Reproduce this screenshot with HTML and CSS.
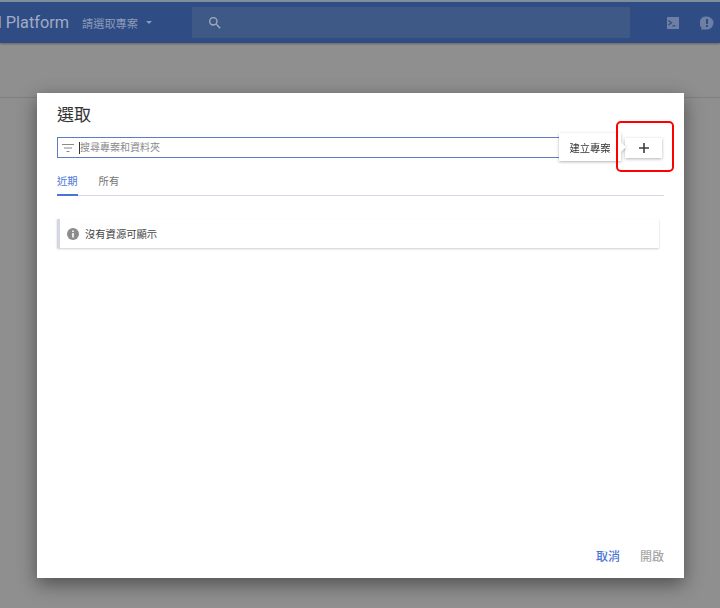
FILE: index.html
```html
<!DOCTYPE html>
<html lang="zh-Hant">
<head>
  <meta charset="UTF-8" />
  <title>選取</title>
  <link rel="stylesheet" href="styles.css">
</head>
<body>

  <header class="topbar">
    <div class="brand"><span>Google Cloud Platform</span></div>
    <div class="project-picker">
      <span>請選取專案</span>
      <i class="caret"></i>
    </div>
    <div class="search">
      <svg width="16" height="16" viewBox="0 0 24 24"><path fill="#a1adc4" d="M15.5 14h-.79l-.28-.27A6.47 6.47 0 0 0 16 9.5 6.5 6.5 0 1 0 9.5 16c1.61 0 3.09-.59 4.23-1.57l.27.28v.79l5 4.99L20.49 19l-4.99-5zm-6 0a4.5 4.5 0 1 1 0-9 4.5 4.5 0 0 1 0 9z"/></svg>
    </div>
    <div class="topbar-icons">
      <svg width="12" height="12" viewBox="0 0 12 12"><path fill="#6d7fa3" d="M0 0h12v12H0z"/><path fill="none" stroke="#2f4c85" stroke-width="1.200" d="M1.500 3.500 4.500 5.800 1.500 8"/><path fill="none" stroke="#2f4c85" stroke-width="1.200" d="M5.500 8.800h3"/></svg>
      <svg width="14" height="14" viewBox="0 0 14 14"><path fill="#6d7fa3" d="M7 .5a6.500 6.500 0 0 1 0 13H.8l1-1.600A6.500 6.500 0 0 1 7 .5z"/><path fill="#2f4c85" d="M6 3h2v5H6zM6 9h2v2H6z"/></svg>
    </div>
  </header>

  <div class="subbar"></div>

  <section class="dialog">
    <h2>選取</h2>

    <div class="filter-row">
      <div class="filter">
        <svg width="14" height="10" viewBox="0 0 14 10"><path fill="none" stroke="#8a8a8a" d="M1 1.500h12M3 5h8M5.500 8.500h3"/></svg>
        <i class="cursor"></i>
        <span>搜尋專案和資料夾</span>
      </div>
      <button class="add-btn">
        <svg width="12" height="12" viewBox="0 0 12 12"><path fill="#3c3c3c" d="M5.200 1h1.600v4.200H11v1.600H6.800V11H5.200V6.800H1V5.200h4.200z"/></svg>
      </button>
    </div>

    <nav class="tabs">
      <a class="active">近期</a>
      <a>所有</a>
    </nav>

    <div class="notice">
      <svg width="12" height="12" viewBox="0 0 12 12"><circle cx="6" cy="6" r="6" fill="#8c8c8c"/><path fill="#fff" d="M5.200 2.500h1.600v1.500H5.200zM5.200 5h1.600v4.500H5.200z"/></svg>
      <span>沒有資源可顯示</span>
    </div>

    <div class="actions">
      <a class="cancel">取消</a>
      <a class="open">開啟</a>
    </div>

    <div class="tooltip">建立專案</div>
    <div class="highlight"></div>
  </section>

</body>
</html>
```

FILE: styles.css
```css
:root {
  --font-stack: Roboto, "Noto Sans CJK TC", sans-serif;
  --blue: #4a74d8;
  --line: #d5d8e4;
}

* {
  margin: 0;
  padding: 0;
  box-sizing: border-box;
}

body {
  width: 720px;
  height: 608px;
  overflow: hidden;
  position: relative;
  font-family: var(--font-stack);
  background-color: #8f8f8f;
}

.topbar {
  height: 43px;
  display: flex;
  align-items: center;
  background-color: #2f4c85;
  border-top: 2px solid #7d8f9c;
  box-shadow: 0 1px 2px rgba(0, 0, 0, 0.3);
}

.brand {
  width: 69px;
  display: flex;
  justify-content: flex-end;
  overflow: hidden;
  white-space: nowrap;
  font-size: 16.300px;
  color: #a1adc4;
}

.project-picker {
  display: flex;
  align-items: center;
  gap: 8px;
  margin-left: 13px;
  font-size: 11.200px;
  color: #8c9ab6;
}

.caret {
  border-left: 3px solid transparent;
  border-right: 3px solid transparent;
  border-top: 3px solid #8c9ab6;
}

.search {
  width: 438px;
  height: 31px;
  margin-left: 40px;
  padding-left: 15px;
  display: flex;
  align-items: center;
  background-color: #3f5986;
}

.topbar-icons {
  display: flex;
  align-items: center;
  gap: 21px;
  margin-left: 37px;
}

.subbar {
  height: 55px;
  border-bottom: 1px solid #7f7f7f;
}

.dialog {
  position: absolute;
  left: 37px;
  top: 93px;
  width: 647px;
  height: 485px;
  padding: 13px 20px 14px;
  display: flex;
  flex-direction: column;
  background-color: #fff;
  box-shadow: 0 6px 18px rgba(0, 0, 0, 0.45);
}

.dialog h2 {
  font-size: 17px;
  font-weight: 400;
  line-height: 18px;
  color: #333;
}

.filter-row {
  display: flex;
  align-items: center;
  margin-top: 13px;
}

.filter {
  width: 526px;
  height: 21px;
  display: flex;
  align-items: center;
  padding-left: 3px;
  border: 1px solid #5c7cc9;
  font-size: 10px;
  color: #8b8b8b;
}

.filter span {
  padding-bottom: 2px;
}

.cursor {
  width: 1px;
  height: 12px;
  margin-left: 4px;
  background-color: #333;
}

.add-btn {
  width: 37px;
  height: 20px;
  margin-left: 42px;
  display: flex;
  align-items: center;
  justify-content: center;
  border: none;
  background-color: #fff;
  box-shadow: 0 1px 3px rgba(0, 0, 0, 0.3);
}

.tabs {
  display: flex;
  gap: 21px;
  margin-top: 13px;
  height: 25px;
  width: 607px;
  border-bottom: 1px solid var(--line);
  font-size: 10.300px;
  color: #757575;
}

.tabs a {
  height: 25px;
  padding-top: 2px;
}

.tabs .active {
  color: var(--blue);
  border-bottom: 2px solid var(--blue);
}

.notice {
  display: flex;
  align-items: center;
  gap: 6px;
  width: 602px;
  height: 29px;
  margin-top: 23px;
  padding-left: 7px;
  border-left: 3px solid var(--line);
  box-shadow: 0 1px 2px rgba(0, 0, 0, 0.2);
  font-size: 10.300px;
  color: #444;
}

.actions {
  display: flex;
  justify-content: flex-end;
  gap: 20px;
  margin-top: auto;
  font-size: 12px;
  font-weight: 500;
}

.cancel {
  color: var(--blue);
}

.open {
  color: #a8a8a8;
}

.tooltip {
  position: absolute;
  left: 522px;
  top: 40px;
  width: 62px;
  height: 28px;
  display: flex;
  align-items: center;
  justify-content: center;
  background-color: #fff;
  filter: drop-shadow(0 1px 1.500px rgba(0, 0, 0, 0.3));
  font-size: 10.300px;
  color: #333;
}

.tooltip::after {
  content: "";
  position: absolute;
  right: -5px;
  top: 9px;
  border-left: 5px solid #fff;
  border-top: 5px solid transparent;
  border-bottom: 5px solid transparent;
}

.highlight {
  position: absolute;
  left: 579px;
  top: 28px;
  width: 58px;
  height: 51px;
  border: 2.500px solid #f00;
  border-radius: 5px;
}
```
